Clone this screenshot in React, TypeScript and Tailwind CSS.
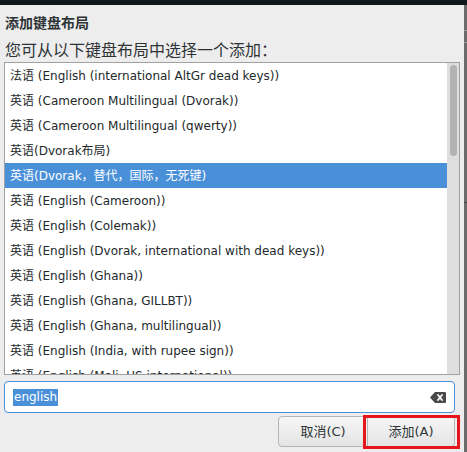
const layouts = [
  "法语 (English (international AltGr dead keys))",
  "英语 (Cameroon Multilingual (Dvorak))",
  "英语 (Cameroon Multilingual (qwerty))",
  "英语(Dvorak布局)",
  "英语(Dvorak，替代，国际，无死键)",
  "英语 (English (Cameroon))",
  "英语 (English (Colemak))",
  "英语 (English (Dvorak, international with dead keys))",
  "英语 (English (Ghana))",
  "英语 (English (Ghana, GILLBT))",
  "英语 (English (Ghana, multilingual))",
  "英语 (English (India, with rupee sign))",
  "英语 (English (Mali, US international))",
];

const SELECTED = 4;

function ClearIcon() {
  return (
    <svg width="16" height="11" viewBox="0 0 16 11" aria-hidden="true">
      <path d="M5 0H15a1 1 0 0 1 1 1v9a1 1 0 0 1-1 1H5L0 5.5Z" fill="#4a4a4a" />
      <path
        d="M8 3l4 5M12 3l-4 5"
        stroke="#ffffff"
        strokeWidth={1.8}
        strokeLinecap="round"
      />
    </svg>
  );
}

export default function App() {
  return (
    <div
      className="w-[467px] h-[452px] overflow-hidden bg-[#0d191b] flex flex-col text-[#2e3436]"
      style={{ fontFamily: '"DejaVu Sans", "Noto Sans CJK SC", sans-serif' }}
    >
      <div className="h-[5px] shrink-0" />
      <div className="flex flex-1 min-h-0">
        <div className="relative w-[464px] bg-[#ededed] flex flex-col px-[4px]">
          <div className="h-[35px] flex items-center pl-[1px] pt-[2px] text-[14px] font-bold">
            添加键盘布局
          </div>
          <div className="h-[22px] flex items-center pl-[1px] text-[16px] text-[#2e3436]">
            您可从以下键盘布局中选择一个添加：
          </div>

          <div className="h-[313px] border border-[#a1a1a1] bg-white flex overflow-hidden">
            <div className="flex-1 flex flex-col">
              {layouts.map((name, i) => (
                <div
                  key={name}
                  className={`h-[25px] shrink-0 flex items-center pl-[5px] text-[12px] whitespace-nowrap ${
                    i === SELECTED ? "bg-[#4a90d9] text-white" : "text-[#23292b]"
                  }`}
                >
                  {name}
                </div>
              ))}
            </div>
            <div className="w-[12px] bg-[#dedede] pt-[2px] flex justify-center">
              <div className="w-[7px] h-[91px] rounded-full bg-[#b3b3b3]" />
            </div>
          </div>

          <div className="mt-[6px] h-[32px] mr-[5px] rounded-[4px] border border-[#4a90d9] bg-white flex items-center px-[8px]">
            <span className="text-[12px] leading-[17px] bg-[#4a90d9] text-white px-[1px]">
              english
            </span>
            <div className="flex-1" />
            <ClearIcon />
          </div>

          <div className="mt-[3px] flex justify-end pr-[5px]">
            <button className="w-[90px] h-[31px] rounded-l-[4px] border border-[#b6b6b6] bg-gradient-to-b from-[#f6f6f6] to-[#e4e4e4] text-[13px] text-[#2e3436]">
              取消(C)
            </button>
            <button className="w-[87px] h-[31px] rounded-r-[4px] border border-l-0 border-[#b6b6b6] bg-gradient-to-b from-[#f6f6f6] to-[#e4e4e4] text-[13px] text-[#2e3436]">
              添加(A)
            </button>
          </div>

          <div className="absolute left-[363px] top-[410px] w-[97px] h-[34px] border-[3px] border-[#e8141c]" />
        </div>
        <div className="flex-1 bg-[#6b6b6b] flex flex-col">
          <div className="h-[25px]" />
          <div className="h-[13px] border-y border-[#9a9a9a]" />
          <div className="h-[159px]" />
          <div className="h-[1px] bg-[#444]" />
        </div>
      </div>
    </div>
  );
}
